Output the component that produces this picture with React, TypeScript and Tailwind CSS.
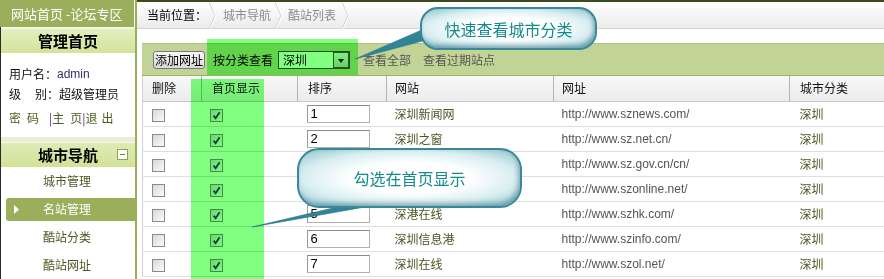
import React from 'react';

const rows = [
  { n: '1', site: '深圳新闻网', url: 'http://www.sznews.com/' },
  { n: '2', site: '深圳之窗', url: 'http://www.sz.net.cn/' },
  { n: '', site: '', url: 'http://www.sz.gov.cn/cn/' },
  { n: '', site: '', url: 'http://www.szonline.net/' },
  { n: '5', site: '深港在线', url: 'http://www.szhk.com/' },
  { n: '6', site: '深圳信息港', url: 'http://www.szinfo.com/' },
  { n: '7', site: '深圳在线', url: 'http://www.szol.net/' },
];

function Box({ checked }: { checked?: boolean }) {
  return (
    <span className="inline-flex w-[13px] h-[13px] border border-[#8a8a8a] bg-gradient-to-br from-[#d8d8d8] to-[#fbfbfb] items-center justify-center align-middle">
      {checked && (
        <svg width="9" height="9" viewBox="0 0 9 9">
          <path d="M1.6 4.6 L3.6 7.2 L7.6 1.2" stroke="#1c3c8c" strokeWidth="1.8" fill="none" />
        </svg>
      )}
    </span>
  );
}

function Chevron({ className = '' }: { className?: string }) {
  return (
    <svg width="10" height="27" viewBox="0 0 10 27" className={className}>
      <path d="M2 0 L8 13.5 L2 27" stroke="#cfcfcf" strokeWidth="1" fill="none" />
      <path d="M3 0 L9 13.5 L3 27" stroke="#ffffff" strokeWidth="1" fill="none" />
    </svg>
  );
}

const menu = ['城市管理', '名站管理', '酷站分类', '酷站网址'];

export default function App() {
  return (
    <div className="relative isolate w-[884px] h-[279px] overflow-hidden bg-white flex font-['Noto_Sans_CJK_SC',sans-serif] text-[12px] text-[#111]">
      {/* Sidebar */}
      <aside className="w-[137px] shrink-0 flex flex-col border-r-2 border-[#9aae5a] h-full">
        <div className="h-[30px] mr-[1px] bg-[#9bae5b] text-white text-[13px] pl-[11px] flex items-center">
          网站首页 -论坛专区
        </div>
        <div className="flex-1 flex flex-col border-l border-[#2a2a2a]">
          <div className="h-[26px] border-t-2 border-[#f4f7e6] bg-gradient-to-b from-[#e4eec0] to-[#d3e399] flex items-center justify-center text-[15px] font-bold text-black">
            管理首页
          </div>
          <div className="pl-[8px] pt-[11px]">
            <div className="h-[20px] flex items-center">
              <span>用户名：</span>
              <span className="font-['Liberation_Sans',Arial,sans-serif] text-[#3b2b6e]">admin</span>
            </div>
            <div className="h-[20px] flex items-center">
              <span>级</span>
              <span className="ml-[14px]">别：超级管理员</span>
            </div>
            <div className="h-[20px] mt-[4px] flex items-center text-[#4f5d1e]">
              <span>密</span>
              <span className="ml-[6px]">码</span>
              <span className="ml-[10px] text-[#5a2882]">|</span>
              <span>主</span>
              <span className="ml-[6px]">页</span>
              <span className="text-[#5a2882]">|</span>
              <span>退</span>
              <span className="ml-[4px]">出</span>
            </div>
          </div>
          <div className="h-[9px]" />
          <div className="h-[6px] bg-[#e8edd6] border-b border-[#f6f8ee]" />
          <div className="relative h-[24px] bg-gradient-to-b from-[#dfeab6] to-[#d2e297] flex items-center justify-center text-[15px] font-bold text-black">
            城市导航
            <span className="absolute left-[116px] top-[6px] w-[11px] h-[11px] border border-[#8fa24e] bg-white flex items-center justify-center">
              <span className="w-[5px] h-[1px] bg-[#6e8030]" />
            </span>
          </div>
          {menu.map((t, i) =>
            i === 1 ? (
              <div key={t} className="h-[28px] flex items-center">
                <div className="ml-[5px] flex-1 h-[23px] bg-[#9bae5b] rounded-l-[3px] flex items-center text-white">
                  <svg className="ml-[8px]" width="5" height="9" viewBox="0 0 5 9">
                    <path d="M0 0 L5 4.5 L0 9Z" fill="#fff" />
                  </svg>
                  <span className="ml-[24px]">{t}</span>
                </div>
              </div>
            ) : (
              <div key={t} className="h-[28px] flex items-center pl-[42px] text-[#4b5a22]">
                {t}
              </div>
            )
          )}
        </div>
      </aside>

      {/* Main */}
      <main className="flex-1 min-w-0 flex flex-col">
        <div className="h-[29px] border-t-2 border-[#3b4a1f] border-b border-b-[#d6d6d6] bg-gradient-to-b from-white to-[#ebebeb] flex items-center pl-[10px]">
          <span className="text-black">当前位置：</span>
          <Chevron />
          <span className="ml-[6px] text-[#8a8a8a]">城市导航</span>
          <Chevron className="ml-[2px]" />
          <span className="ml-[5px] text-[#8a8a8a]">酷站列表</span>
          <Chevron className="ml-[4px]" />
        </div>
        <div className="h-[14px]" />
        <div className="pl-[5px]">
          <div className="h-[33px] border-t border-[#aec27f] border-b border-b-[#9ab262] bg-[#c1d496] flex items-center">
            <button className="ml-[11px] h-[18px] px-[1px] border border-[#777] rounded-[3px] bg-gradient-to-b from-[#f7f7f7] to-[#d9d9d9] text-black text-[12px] leading-[16px]">
              添加网址
            </button>
            <span className="ml-[8px] text-black">按分类查看</span>
            <div className="ml-[5px] w-[72px] h-[18px] border border-[#4a4a4a] bg-white flex items-center">
              <span className="pl-[4px] flex-1 text-black">深圳</span>
              <span className="w-[16px] h-[16px] border border-[#555] bg-gradient-to-b from-[#f4f4f4] to-[#cfcfcf] flex items-end justify-center pb-[4px]">
                <svg width="6" height="4" viewBox="0 0 6 4">
                  <path d="M0 0 L6 0 L3 4Z" fill="#111" />
                </svg>
              </span>
            </div>
            <span className="ml-[13px] text-[#555]">查看全部</span>
            <span className="ml-[12px] text-[#555]">查看过期站点</span>
          </div>
          <table className="table-fixed border-collapse w-[742px]">
            <colgroup>
              <col className="w-[59px]" />
              <col className="w-[96px]" />
              <col className="w-[89px]" />
              <col className="w-[167px]" />
              <col className="w-[236px]" />
              <col />
            </colgroup>
            <thead>
              <tr className="h-[25px] bg-gradient-to-b from-[#f8f8f8] to-[#ececec]">
                <th className="border-l border-l-[#d0d0d0] border-b border-b-[#c8c8c8] border-r border-r-[#b4b4b4] text-left font-normal pl-[9px]">删除</th>
                <th className="border-b border-b-[#c8c8c8] border-r border-r-[#b4b4b4] text-left font-normal pl-[10px]">首页显示</th>
                <th className="border-b border-b-[#c8c8c8] border-r border-r-[#b4b4b4] text-left font-normal pl-[10px]">排序</th>
                <th className="border-b border-b-[#c8c8c8] border-r border-r-[#b4b4b4] text-left font-normal pl-[8px]">网站</th>
                <th className="border-b border-b-[#c8c8c8] border-r border-r-[#b4b4b4] text-left font-normal pl-[8px]">网址</th>
                <th className="border-b border-b-[#c8c8c8] text-left font-normal pl-[10px]">城市分类</th>
              </tr>
            </thead>
            <tbody>
              {rows.map((r, i) => (
                <tr key={i} className="h-[25px]">
                  <td className="border-l border-l-[#d0d0d0] border-b border-b-[#dedede] pl-[9px]"><Box /></td>
                  <td className="border-b border-b-[#dedede] pl-[8px]"><Box checked /></td>
                  <td className="border-b border-b-[#dedede] pl-[9px]">
                    <input
                      readOnly
                      value={r.n}
                      className="block w-[63px] h-[18px] border border-[#b0b0b0] border-t-[#8a8a8a] border-l-[#9a9a9a] bg-white pl-[3px] text-[13px] text-black font-['Liberation_Sans',Arial,sans-serif] outline-none"
                    />
                  </td>
                  <td className="border-b border-b-[#dedede] pl-[8px] text-[#4e5422]">{r.site}</td>
                  <td className="border-b border-b-[#dedede] pl-[8px] text-[#555] font-['Liberation_Sans',Arial,sans-serif]">{r.url}</td>
                  <td className="border-b border-b-[#dedede] pl-[10px] text-[#4e5422]">深圳</td>
                </tr>
              ))}
            </tbody>
          </table>
        </div>
      </main>

      {/* Green highlight annotations */}
      <div className="absolute left-[207px] top-[39px] w-[151px] h-[36px] bg-[#80ff80] mix-blend-multiply z-10 pointer-events-none" />
      <div className="absolute left-[191px] top-[79px] w-[73px] h-[200px] bg-[#80ff80] mix-blend-multiply z-10 pointer-events-none" />

      {/* Callout pointers */}
      <svg className="absolute left-0 top-0 z-30 pointer-events-none" width="884" height="279" viewBox="0 0 884 279">
        <polygon points="424,29 430,39 355,59" fill="#2f8597" stroke="#2a7686" strokeWidth="0.6" />
        <polygon points="350,204 382,204 252,227" fill="#2f8597" stroke="#2a7686" strokeWidth="0.6" />
      </svg>

      {/* Callout bubbles */}
      <div className="absolute left-[420px] top-[7px] w-[177px] h-[43px] z-40 rounded-[18px] border-2 border-[#3a8797] bg-[radial-gradient(ellipse_at_center,#ffffff_38%,#d9eef1_68%,#8cc3cd_100%)] shadow-[inset_-2px_-3px_4px_rgba(30,100,115,0.45)] flex items-center justify-center text-[16px] text-[#138a8c]">
        快速查看城市分类
      </div>
      <div className="absolute left-[297px] top-[148px] w-[225px] h-[60px] z-40 rounded-[22px] border-2 border-[#3a8797] bg-[radial-gradient(ellipse_at_center,#ffffff_38%,#d9eef1_68%,#8cc3cd_100%)] shadow-[inset_-2px_-3px_5px_rgba(30,100,115,0.45)] flex items-center justify-center text-[16px] text-[#138a8c]">
        勾选在首页显示
      </div>
    </div>
  );
}
